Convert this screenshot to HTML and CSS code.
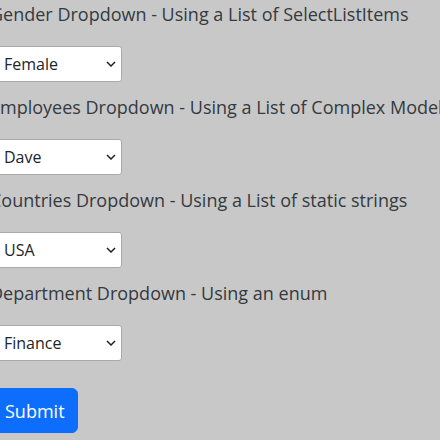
FILE: index.html
```html
<!DOCTYPE html>
<html lang="en">
<head>
<meta charset="utf-8">
<title>Dropdowns</title>
<link rel="stylesheet" href="styles.css">
</head>
<body>
<form class="form">
  <div class="group">
    <label class="label" for="g">Gender Dropdown - Using a List of SelectListItems</label>
    <div class="select-wrap">
      <select id="g" class="select"><option>Female</option></select>
      <svg class="chev" viewBox="0 0 10 6" width="10" height="6"><path d="M1 1l4 4 4-4" fill="none" stroke="#222" stroke-width="1.5"/></svg>
    </div>
  </div>
  <div class="group">
    <label class="label" for="e">Employees Dropdown - Using a List of Complex Models</label>
    <div class="select-wrap">
      <select id="e" class="select"><option>Dave</option></select>
      <svg class="chev" viewBox="0 0 10 6" width="10" height="6"><path d="M1 1l4 4 4-4" fill="none" stroke="#222" stroke-width="1.5"/></svg>
    </div>
  </div>
  <div class="group">
    <label class="label" for="c">Countries Dropdown - Using a List of static strings</label>
    <div class="select-wrap">
      <select id="c" class="select"><option>USA</option></select>
      <svg class="chev" viewBox="0 0 10 6" width="10" height="6"><path d="M1 1l4 4 4-4" fill="none" stroke="#222" stroke-width="1.5"/></svg>
    </div>
  </div>
  <div class="group">
    <label class="label" for="d">Department Dropdown - Using an enum</label>
    <div class="select-wrap">
      <select id="d" class="select"><option>Finance</option></select>
      <svg class="chev" viewBox="0 0 10 6" width="10" height="6"><path d="M1 1l4 4 4-4" fill="none" stroke="#222" stroke-width="1.5"/></svg>
    </div>
  </div>
  <button type="submit" class="btn">Submit</button>
</form>
</body>
</html>
```
FILE: styles.css
```css
html, body {
  margin: 0;
  padding: 0;
  background: #c8c8c8;
  overflow: hidden;
}
body {
  font-family: "Open Sans", "Noto Sans", sans-serif;
  font-size: 18px;
  color: #343a40;
}
.form {
  display: flex;
  flex-direction: column;
  align-items: flex-start;
  margin-left: -10px;
  padding-top: 1px;
  white-space: nowrap;
}
.group {
  display: flex;
  flex-direction: column;
  align-items: flex-start;
  margin-bottom: 12px;
}
.label {
  line-height: 27px;
  margin-bottom: 18px;
}
.select-wrap {
  position: relative;
}
.select {
  appearance: none;
  -webkit-appearance: none;
  width: 132px;
  height: 36px;
  padding: 0 13px;
  font-family: inherit;
  font-size: 16px;
  color: #212529;
  background: #fff;
  border: 1px solid #a9a9a9;
  border-radius: 3px;
}
.chev {
  position: absolute;
  right: 6px;
  top: 15px;
  pointer-events: none;
}
.btn {
  margin-top: 15px;
  background: #0d6efd;
  color: #fff;
  border: 1px solid #0d6efd;
  border-radius: 6px;
  font-family: inherit;
  font-size: 18px;
  height: 45px;
  padding: 0 12px 0 14px;
}
```
